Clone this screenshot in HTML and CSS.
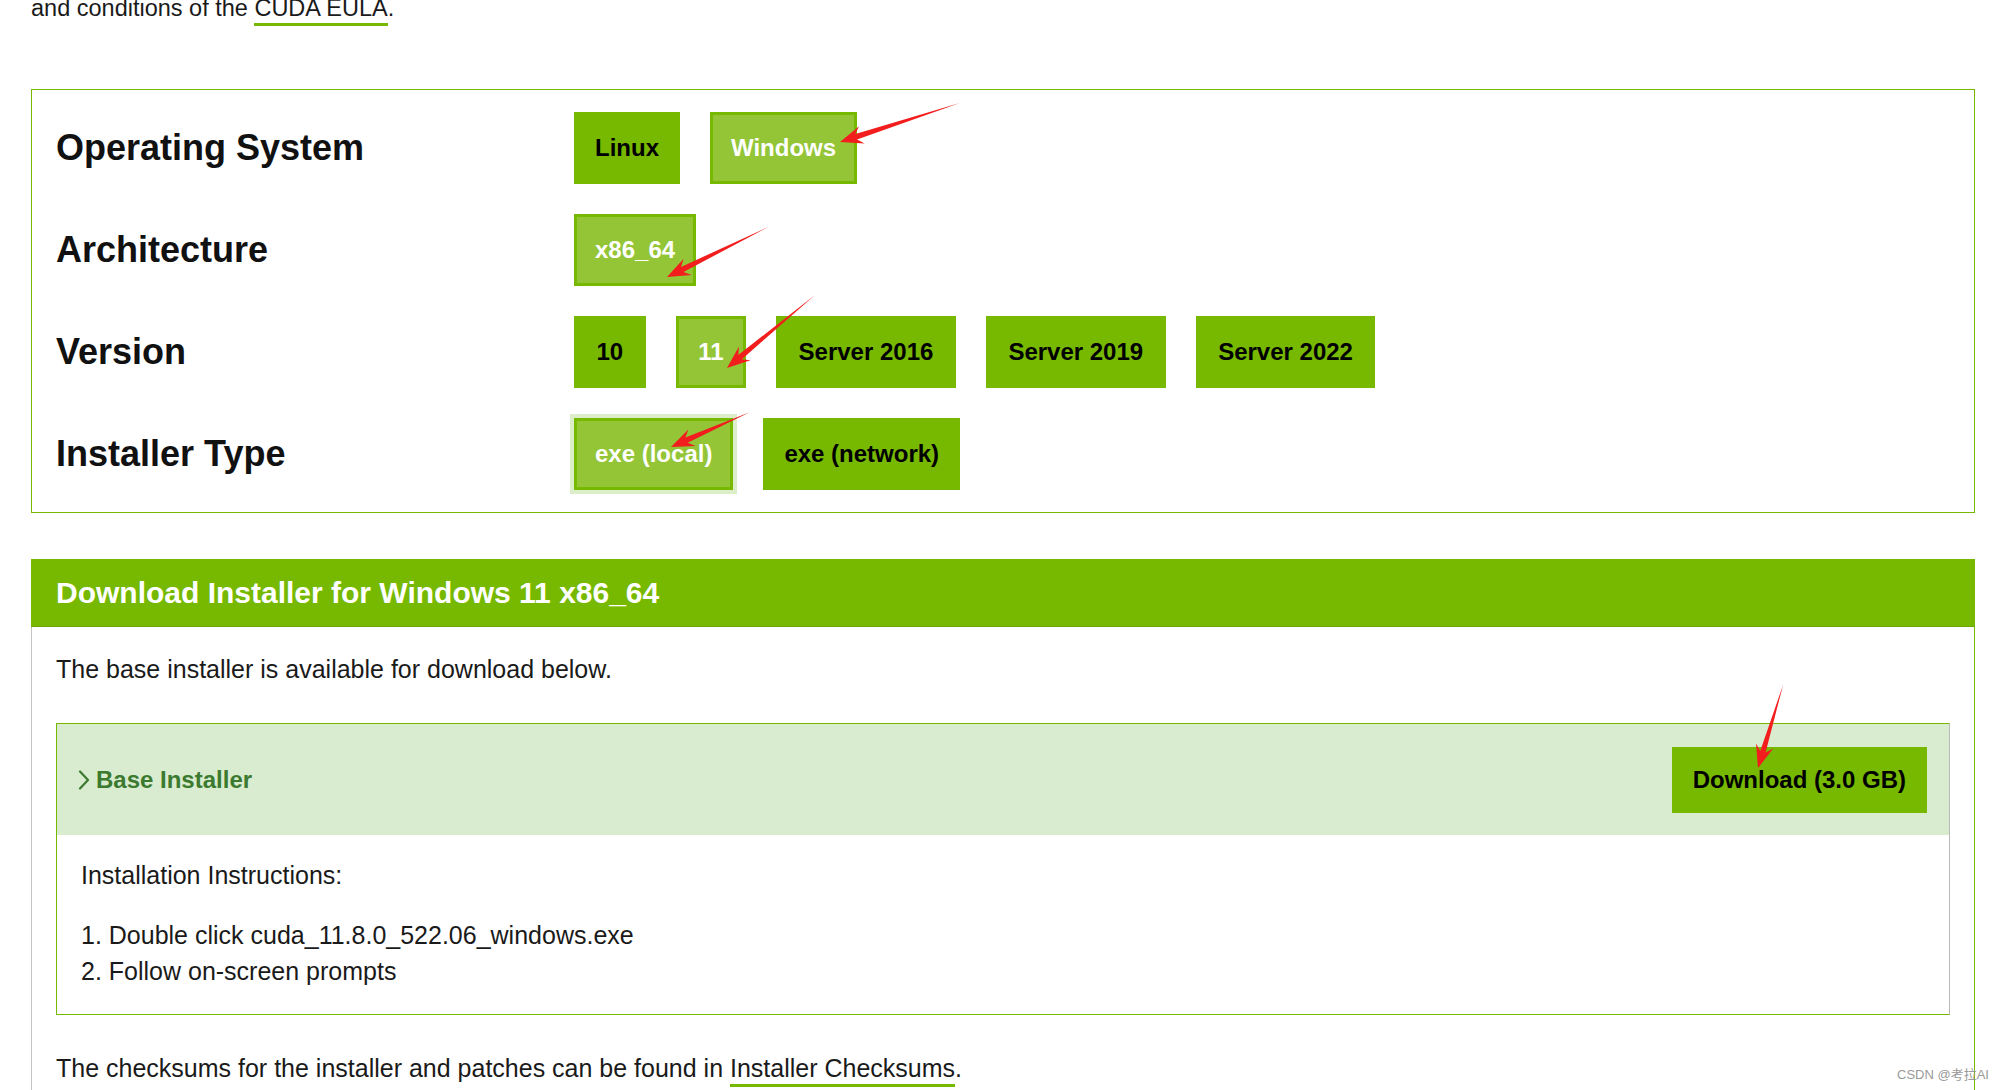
FILE: index.html
```html
<!DOCTYPE html>
<html lang="en">
<head>
<meta charset="utf-8">
<title>CUDA Toolkit Download</title>
<link rel="stylesheet" href="styles.css">
</head>
<body>
<main class="page">
  <p class="intro">and conditions of the <a class="link">CUDA EULA</a>.</p>

  <section class="selector">
    <div class="row-label">Operating System</div>
    <div class="opts"><span class="btn">Linux</span><span class="btn sel">Windows</span></div>

    <div class="row-label">Architecture</div>
    <div class="opts"><span class="btn sel">x86_64</span></div>

    <div class="row-label">Version</div>
    <div class="opts versions"><span class="btn">10</span><span class="btn sel">11</span><span class="btn">Server 2016</span><span class="btn">Server 2019</span><span class="btn">Server 2022</span></div>

    <div class="row-label">Installer Type</div>
    <div class="opts"><span class="btn sel focus">exe (local)</span><span class="btn">exe (network)</span></div>
  </section>

  <section class="download">
    <header class="dl-head">Download Installer for Windows 11 x86_64</header>
    <div class="dl-body">
      <p class="lead">The base installer is available for download below.</p>
      <div class="card">
        <div class="card-head">
          <span class="toggle"><svg class="chev" width="12" height="20" viewBox="0 0 12 20"><path d="M2 1.5 L10 10 L2 18.5" fill="none" stroke="#3b7a2f" stroke-width="2.2" stroke-linecap="round" stroke-linejoin="round"/></svg>Base Installer</span>
          <a class="btn dl">Download (3.0 GB)</a>
        </div>
        <div class="card-body">
          <p>Installation Instructions:</p>
          <ol>
            <li>Double click cuda_11.8.0_522.06_windows.exe</li>
            <li>Follow on-screen prompts</li>
          </ol>
        </div>
      </div>
      <p class="checksums">The checksums for the installer and patches can be found in <a class="link">Installer Checksums</a>.</p>
    </div>
  </section>
</main>

<svg class="marks" width="2001" height="1090" viewBox="0 0 2001 1090">
  <g fill="#f21d1d">
    <polygon transform="translate(840,142) rotate(162)" points="-126,0 -17,-2.8 -23,-9 0,0 -23,9 -17,2.8"/>
    <polygon transform="translate(667,277) rotate(153.7)" points="-113,0 -17,-2.8 -23,-9 0,0 -23,9 -17,2.8"/>
    <polygon transform="translate(727,368) rotate(140.3)" points="-114,0 -17,-2.8 -23,-9 0,0 -23,9 -17,2.8"/>
    <polygon transform="translate(671,447) rotate(156.1)" points="-86,0 -17,-2.8 -23,-9 0,0 -23,9 -17,2.8"/>
    <polygon transform="translate(1758,768) rotate(106.8)" points="-87,0 -17,-2.8 -23,-9 0,0 -23,9 -17,2.8"/>
  </g>
</svg>
<div class="watermark">CSDN @考拉AI</div>
</body>
</html>
```

FILE: styles.css
```css
html, body {
  margin: 0;
  padding: 0;
  overflow: hidden;
  background: #fff;
}

body {
  font-family: "Liberation Sans", Arial, "Noto Sans CJK SC", sans-serif;
  color: #1a1a1a;
  width: 2001px;
  height: 1090px;
  position: relative;
}

.page {
  padding: 0 26px 0 31px;
}

.intro {
  margin: -10px 0 0;
  font-size: 23.5px;
  line-height: 36px;
}

.link {
  color: #1a1a1a;
  text-decoration: none;
  border-bottom: 3px solid #76b900;
  padding-bottom: 2px;
}

/* selector box */
.selector {
  margin-top: 63px;
  border: 1px solid #76b900;
  padding: 22px 24px;
  display: grid;
  grid-template-columns: 518px 1fr;
  row-gap: 30px;
}

.row-label {
  align-self: center;
  font-size: 36px;
  font-weight: bold;
  color: #111;
}

.opts {
  display: flex;
  gap: 30px;
}

.btn {
  box-sizing: border-box;
  height: 72px;
  display: inline-flex;
  align-items: center;
  padding: 0 18px;
  border: 3px solid #76b900;
  background: #76b900;
  color: #000;
  font-size: 24px;
  font-weight: bold;
  white-space: nowrap;
}

.versions .btn {
  padding: 0 19.5px;
}

.btn.sel {
  background: #93c537;
  color: #fff;
}

.btn.focus {
  box-shadow: 0 0 0 4px #dcedc9;
}

/* download section */
.download {
  margin-top: 46px;
}

.dl-head {
  height: 68px;
  line-height: 68px;
  background: #76b900;
  color: #fff;
  font-size: 30px;
  font-weight: bold;
  padding: 0 25px;
  border-bottom: 1px solid #6aa800;
  box-sizing: border-box;
}

.dl-body {
  border-left: 1px solid #c4c4c4;
  border-right: 1px solid #76b900;
  padding: 24px 24px 60px;
  font-size: 25px;
  line-height: 36px;
}

.lead {
  margin: 0;
}

.card {
  margin-top: 36px;
  border: 1px solid #76b900;
  border-right-color: #b8b8b8;
}

.card-head {
  height: 111px;
  background: #d9ecd0;
  display: flex;
  align-items: center;
  justify-content: space-between;
  padding: 0 22px 0 21px;
}

.toggle {
  display: flex;
  align-items: center;
  gap: 6px;
  color: #3b7a2f;
  font-weight: bold;
  font-size: 24px;
}

.chev {
  display: block;
}

.btn.dl {
  height: 66px;
  padding: 0 18px;
  text-decoration: none;
}

.card-body {
  padding: 22px 24px 25px;
}

.card-body p {
  margin: 0;
}

.card-body ol {
  margin: 24px 0 0;
  padding: 0;
  list-style-position: inside;
}

.checksums {
  margin: 35px 0 0;
}

/* annotation overlay */
.marks {
  position: absolute;
  left: 0;
  top: 0;
  pointer-events: none;
}

.watermark {
  position: absolute;
  left: 1897px;
  top: 1064px;
  font-size: 13px;
  color: #9a9a9a;
  font-family: "Liberation Sans", "Noto Sans CJK SC", sans-serif;
}
```
